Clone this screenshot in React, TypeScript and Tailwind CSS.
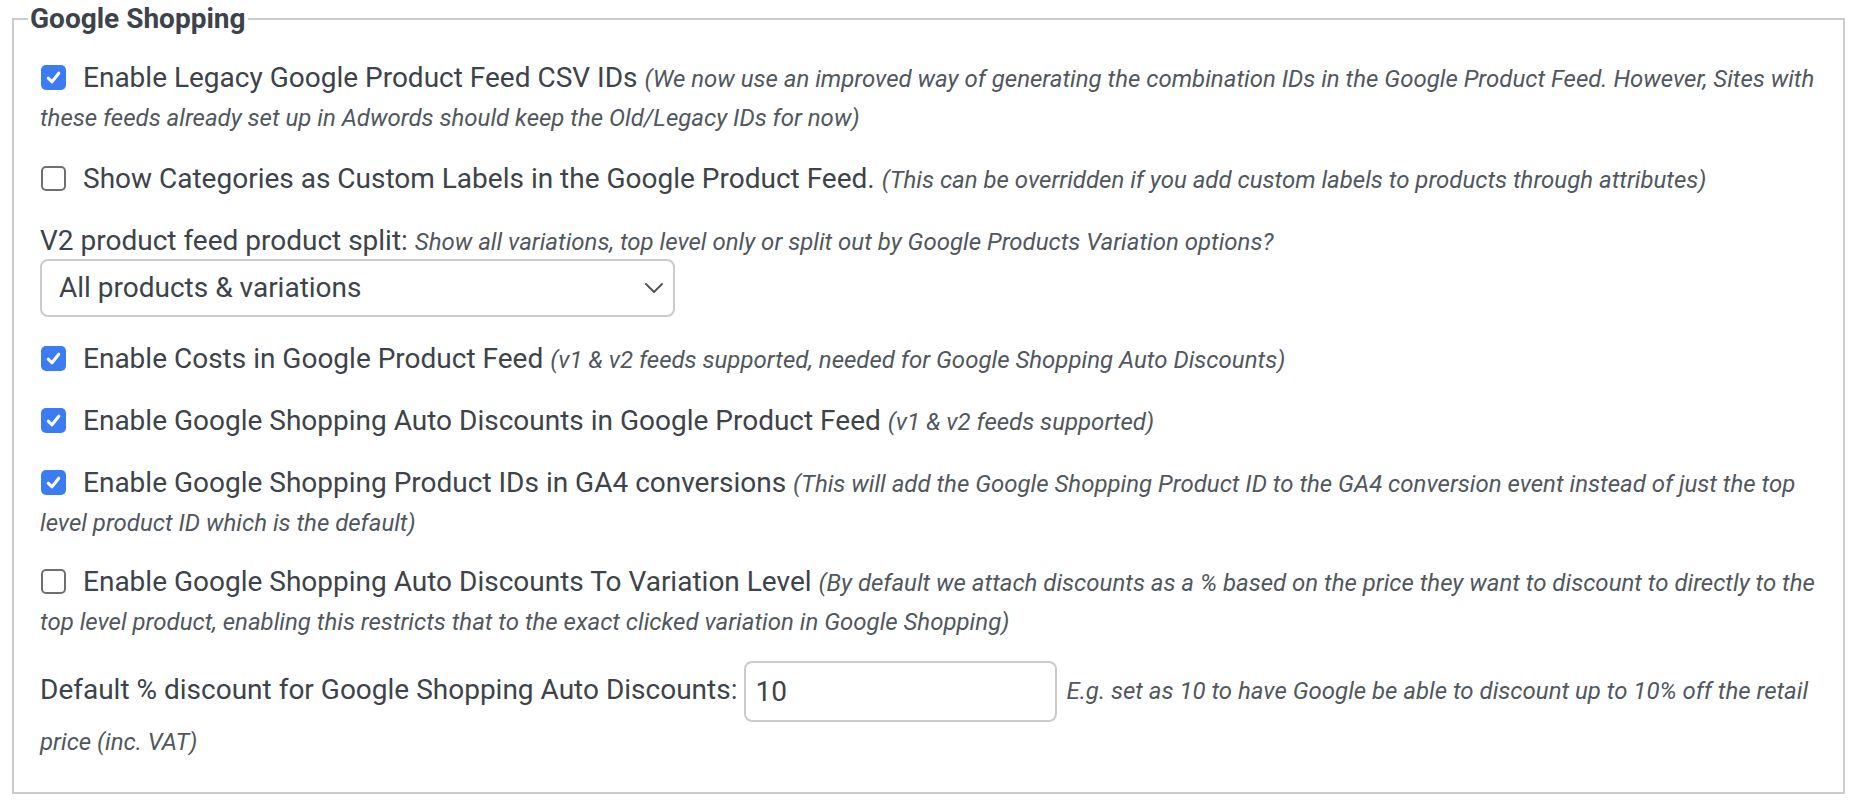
import React from "react";

function Box({ checked }: { checked: boolean }) {
  if (checked) {
    return (
      <span className="relative -top-[2px] ml-px mr-[17px] inline-flex h-[25px] w-[25px] items-center justify-center rounded-[5px] bg-[#3b7cf3] align-middle">
        <svg width="17" height="17" viewBox="0 0 17 17">
          <path d="M3.2 9.2 L7 12.8 L13.8 4.2" fill="none" stroke="#ffffff" strokeWidth="3" strokeLinecap="round" strokeLinejoin="round" />
        </svg>
      </span>
    );
  }
  return (
    <span className="relative -top-[2px] ml-px mr-[17px] inline-block h-[25px] w-[25px] rounded-[5px] border-2 border-[#6f6f6f] bg-white align-middle" />
  );
}

function Note({ children }: { children: React.ReactNode }) {
  return <i className="text-[24px] text-[#50575e]">{children}</i>;
}

export default function App() {
  return (
    <div className="min-h-screen bg-white pl-[12px] pr-[15px] font-['Roboto',sans-serif] text-[#3c434a]">
      <fieldset className="m-0 border-2 border-[#cccccc] pb-[31px] pl-[14px] pr-[26px]">
        <legend className="px-[2px] text-[28px] font-bold leading-[38px] text-[#3c434a]">Google Shopping</legend>
        <div className="flex flex-col gap-[23px] pl-[12px] pt-[21px] text-[28px] leading-[38px]">
          <div>
            <Box checked />
            Enable Legacy Google Product Feed CSV IDs{" "}
            <Note>
              (We now use an improved way of generating the combination IDs in the Google Product Feed. However, Sites with these feeds already set up in Adwords should keep the Old/Legacy IDs for now)
            </Note>
          </div>
          <div>
            <Box checked={false} />
            Show Categories as Custom Labels in the Google Product Feed.{" "}
            <Note>(This can be overridden if you add custom labels to products through attributes)</Note>
          </div>
          <div className="flex flex-col items-start">
            <div>
              V2 product feed product split:{" "}
              <Note>Show all variations, top level only or split out by Google Products Variation options?</Note>
            </div>
            <div className="-mt-[2px] flex h-[58px] w-[635px] items-center justify-between rounded-[8px] border-2 border-[#cbcbcb] bg-white pl-[17px] pr-[9px]">
              <span>All products &amp; variations</span>
              <svg width="20" height="12" viewBox="0 0 20 12">
                <path d="M2 2 L10 10 L18 2" fill="none" stroke="#50575e" strokeWidth="2" strokeLinecap="round" strokeLinejoin="round" />
              </svg>
            </div>
          </div>
          <div>
            <Box checked />
            Enable Costs in Google Product Feed{" "}
            <Note>(v1 &amp; v2 feeds supported, needed for Google Shopping Auto Discounts)</Note>
          </div>
          <div>
            <Box checked />
            Enable Google Shopping Auto Discounts in Google Product Feed <Note>(v1 &amp; v2 feeds supported)</Note>
          </div>
          <div>
            <Box checked />
            Enable Google Shopping Product IDs in GA4 conversions{" "}
            <Note>
              (This will add the Google Shopping Product ID to the GA4 conversion event instead of just the top level product ID which is the default)
            </Note>
          </div>
          <div className="-mt-[2px]">
            <Box checked={false} />
            Enable Google Shopping Auto Discounts To Variation Level{" "}
            <Note>
              (By default we attach discounts as a % based on the price they want to discount to directly to the top level product, enabling this restricts that to the exact clicked variation in Google Shopping)
            </Note>
          </div>
          <div className="-mt-[3px]">
            Default % discount for Google Shopping Auto Discounts:
            <input
              type="text"
              defaultValue="10"
              className="ml-[7px] mr-[9px] h-[61px] w-[313px] rounded-[8px] border-2 border-[#cbcbcb] bg-white px-[9px] align-middle text-[28px] text-[#3c434a] outline-none"
            />
            <Note>E.g. set as 10 to have Google be able to discount up to 10% off the retail price (inc. VAT)</Note>
          </div>
        </div>
      </fieldset>
    </div>
  );
}
